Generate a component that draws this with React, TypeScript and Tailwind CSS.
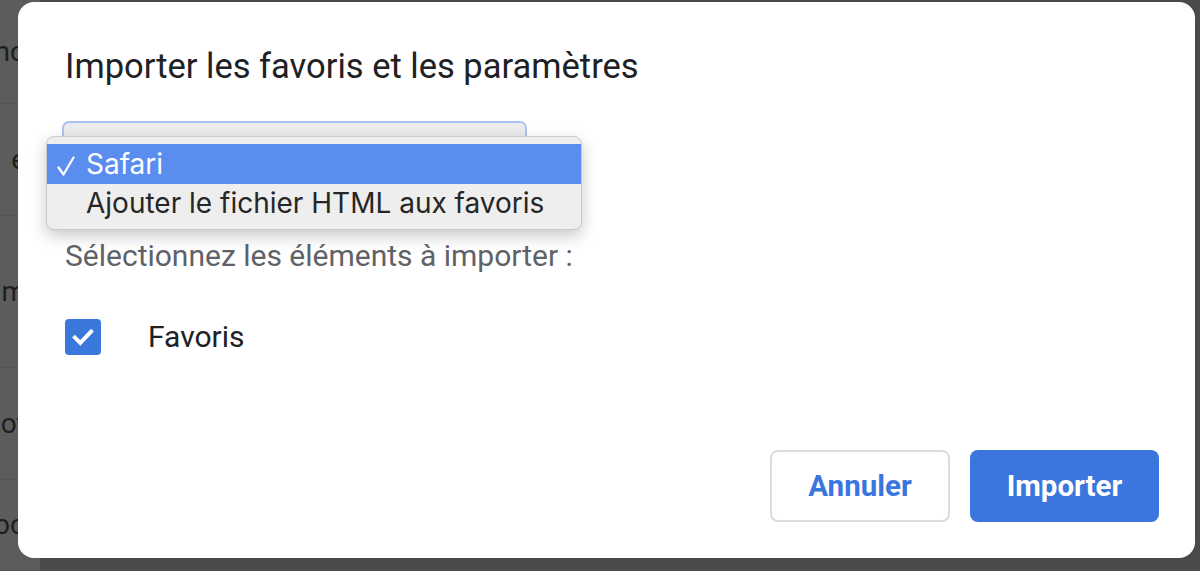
import React from 'react';

const bgRows = [
  { text: 'no', h: 'h-[104px]' },
  { text: 'e', h: 'h-[112px]' },
  { text: 'm', h: 'h-[152px]' },
  { text: 'ot', h: 'h-[112px]' },
  { text: 'oo', h: 'h-[91px]' },
];

export default function App() {
  return (
    <div
      className="relative h-[571px] w-[1200px] overflow-hidden bg-[#4a4a4a]"
      style={{ fontFamily: 'Roboto, "Noto Sans", sans-serif' }}
    >
      {/* Dimmed page behind the dialog */}
      <div className="flex w-[40px] flex-col bg-[#5c5c5c]">
        {bgRows.map((row, i) => (
          <div
            key={i}
            className={`flex ${row.h} items-center justify-end border-b border-[#545454] pr-[14px] text-[28px] text-[#1e1e1e]`}
          >
            {row.text}
          </div>
        ))}
      </div>

      {/* Dialog */}
      <div className="absolute left-[18px] top-[2px] flex h-[556px] w-[1177px] flex-col rounded-[16px] bg-white pl-[47px] pr-[36px] pt-[44px]">
        <h1 className="text-[34.5px] leading-[40px] text-[#202124]">
          Importer les favoris et les paramètres
        </h1>

        <div className="ml-[-3px] mt-[35px] h-[40px] w-[465px] rounded-[7px] border-2 border-[#a9c3f1] bg-[#ececec]" />

        <p className="mt-[77px] text-[30px] leading-[36px] text-[#5f6368]">
          Sélectionnez les éléments à importer :
        </p>

        <div className="mt-[45px] flex items-center">
          <div className="flex h-[36px] w-[36px] items-center justify-center rounded-[4px] bg-[#3b78db]">
            <svg width="26" height="26" viewBox="0 0 24 24" fill="none">
              <path
                d="M4.5 12.5l5 5L19.5 7"
                stroke="white"
                strokeWidth="3.6"
                strokeLinecap="square"
                strokeLinejoin="miter"
              />
            </svg>
          </div>
          <span className="ml-[47px] text-[30px] leading-[36px] text-[#202124]">Favoris</span>
        </div>

        <div className="mt-auto mb-[36px] flex justify-end gap-[20px]">
          <button className="h-[72px] w-[180px] rounded-[8px] border-2 border-[#dadce0] bg-white text-[29.5px] font-bold text-[#3a76dd]">
            Annuler
          </button>
          <button className="h-[72px] w-[189px] rounded-[8px] bg-[#3a76dd] text-[29.5px] font-bold text-white">
            Importer
          </button>
        </div>

        {/* Open select menu */}
        <div
          className="absolute left-[28px] top-[134px] w-[536px] rounded-[8px] border border-[#c9c9c9] bg-[#eeeeee] py-[7px] shadow-[0_6px_16px_rgba(0,0,0,0.22)]"
          style={{ fontFamily: 'Inter, "Liberation Sans", sans-serif' }}
        >
          <div className="flex h-[40px] items-center bg-[#5b8def] text-[28px] text-white">
            <span className="flex w-[39px] items-center pl-[10px] pt-[3px]">
              <svg width="18" height="20" viewBox="0 0 18 20" fill="none">
                <path
                  d="M1.5 11.5L6.5 18.5L16.5 1.5"
                  stroke="white"
                  strokeWidth="2.2"
                  strokeLinecap="round"
                  strokeLinejoin="round"
                />
              </svg>
            </span>
            <span>Safari</span>
          </div>
          <div className="flex h-[38px] items-center text-[28px] text-[#262626]">
            <span className="w-[39px]" />
            <span>Ajouter le fichier HTML aux favoris</span>
          </div>
        </div>
      </div>
    </div>
  );
}
